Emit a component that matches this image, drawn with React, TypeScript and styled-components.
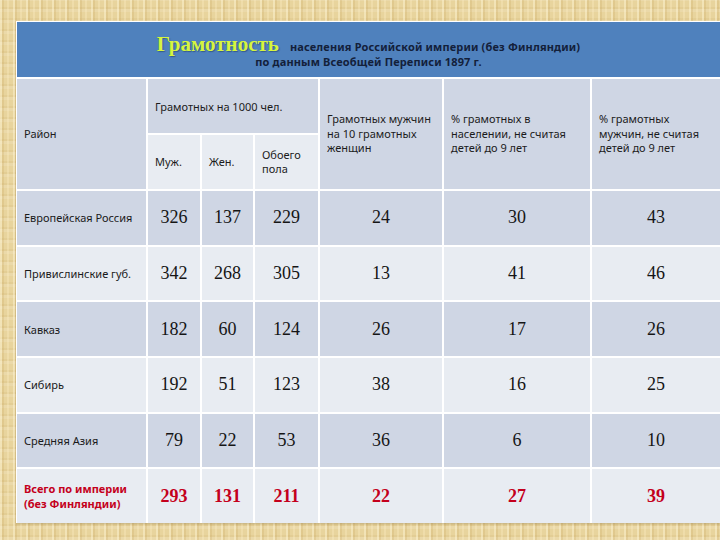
import React from "react";
import styled, { createGlobalStyle } from "styled-components";

const GlobalStyle = createGlobalStyle`
  html, body {
    margin: 0;
    padding: 0;
  }
  body {
    width: 720px;
    height: 540px;
    overflow: hidden;
    background-color: #e8d49d;
    background-image:
      repeating-linear-gradient(90deg, rgba(255, 246, 214, 0.45) 0 2px, rgba(196, 160, 86, 0.22) 2px 4px, transparent 4px 7px, rgba(255, 240, 200, 0.3) 7px 9px, transparent 9px 13px),
      repeating-linear-gradient(0deg, rgba(255, 255, 255, 0.12) 0 3px, rgba(180, 145, 70, 0.1) 3px 5px, transparent 5px 11px);
  }
`;

const Page = styled.div`
  padding: 21px 0 0 16px;
  box-sizing: border-box;
  width: 720px;
  height: 540px;
`;

const Table = styled.div`
  display: grid;
  grid-template-columns: 129px 52px 51px 63px 122px 146px 128px;
  grid-template-rows: 55px 54px 54px repeat(6, 1fr);
  gap: 2px;
  width: 704px;
  height: 502px;
  box-sizing: border-box;
  padding: 1px 0 0 1px;
  background: #ffffff;
  box-shadow: 0 1px 2px rgba(120, 100, 60, 0.35);
`;

const TitleBand = styled.div`
  grid-column: 1 / -1;
  grid-row: 1;
  background: #4f81bd;
  display: flex;
  flex-direction: column;
  align-items: center;
  justify-content: center;
  padding-top: 3px;
`;

const TitleLine = styled.div`
  display: flex;
  align-items: baseline;
  gap: 11px;
  line-height: 21px;
`;

const TitleMain = styled.span`
  font-family: "Liberation Serif", serif;
  font-weight: bold;
  font-size: 21px;
  color: #d6f53e;
  text-shadow: 1px 1px 1px rgba(20, 40, 80, 0.45);
`;

const TitleSmall = styled.span`
  font-family: "Noto Sans", sans-serif;
  font-weight: bold;
  font-size: 11px;
  letter-spacing: 0.15px;
  color: #13203a;
  line-height: 14px;
`;

type Tone = "dark" | "light";

const Cell = styled.div<{ $tone: Tone; $col?: string; $row?: string; $center?: boolean }>`
  background: ${(p) => (p.$tone === "dark" ? "#cfd6e4" : "#e8ecf2")};
  grid-column: ${(p) => p.$col ?? "auto"};
  grid-row: ${(p) => p.$row ?? "auto"};
  display: flex;
  align-items: center;
  justify-content: ${(p) => (p.$center ? "center" : "flex-start")};
  padding: 0 7px;
  min-width: 0;
  box-sizing: border-box;
`;

const HeadText = styled.div<{ $top?: number }>`
  font-family: "Noto Sans", sans-serif;
  font-size: 11px;
  line-height: 14.5px;
  color: #1c1c1c;
  white-space: nowrap;
  margin-top: ${(p) => p.$top ?? 0}px;
`;

const Label = styled.div<{ $total?: boolean }>`
  font-family: "Noto Sans", sans-serif;
  font-size: 11px;
  font-weight: ${(p) => (p.$total ? "bold" : "normal")};
  line-height: 15px;
  color: ${(p) => (p.$total ? "#c4001c" : "#1a1a1a")};
  white-space: nowrap;
`;

const Num = styled.div<{ $total?: boolean }>`
  font-family: "Liberation Serif", serif;
  font-size: 18px;
  font-weight: ${(p) => (p.$total ? "bold" : "normal")};
  color: ${(p) => (p.$total ? "#c4001c" : "#151515")};
`;

type Row = { label: React.ReactNode; values: number[]; total?: boolean };

const rows: Row[] = [
  { label: "Европейская Россия", values: [326, 137, 229, 24, 30, 43] },
  { label: "Привислинские губ.", values: [342, 268, 305, 13, 41, 46] },
  { label: "Кавказ", values: [182, 60, 124, 26, 17, 26] },
  { label: "Сибирь", values: [192, 51, 123, 38, 16, 25] },
  { label: "Средняя Азия", values: [79, 22, 53, 36, 6, 10] },
  {
    label: (
      <>
        Всего по империи
        <br />
        (без Финляндии)
      </>
    ),
    values: [293, 131, 211, 22, 27, 39],
    total: true,
  },
];

export default function App() {
  return (
    <>
      <GlobalStyle />
      <Page>
        <Table>
          <TitleBand>
            <TitleLine>
              <TitleMain>Грамотность</TitleMain>
              <TitleSmall>населения Российской империи (без Финляндии)</TitleSmall>
            </TitleLine>
            <TitleSmall>по данным Всеобщей Переписи 1897 г.</TitleSmall>
          </TitleBand>

          <Cell $tone="dark" $col="1" $row="2 / 4">
            <HeadText>Район</HeadText>
          </Cell>
          <Cell $tone="dark" $col="2 / 5" $row="2">
            <HeadText $top={2}>Грамотных на 1000 чел.</HeadText>
          </Cell>
          <Cell $tone="light" $col="2" $row="3">
            <HeadText>Муж.</HeadText>
          </Cell>
          <Cell $tone="light" $col="3" $row="3">
            <HeadText>Жен.</HeadText>
          </Cell>
          <Cell $tone="light" $col="4" $row="3">
            <HeadText>
              Обоего
              <br />
              пола
            </HeadText>
          </Cell>
          <Cell $tone="dark" $col="5" $row="2 / 4">
            <HeadText>
              Грамотных мужчин
              <br />
              на 10 грамотных
              <br />
              женщин
            </HeadText>
          </Cell>
          <Cell $tone="dark" $col="6" $row="2 / 4">
            <HeadText>
              % грамотных в
              <br />
              населении, не считая
              <br />
              детей до 9 лет
            </HeadText>
          </Cell>
          <Cell $tone="dark" $col="7" $row="2 / 4">
            <HeadText>
              % грамотных
              <br />
              мужчин, не считая
              <br />
              детей до 9 лет
            </HeadText>
          </Cell>

          {rows.map((r, i) => {
            const tone: Tone = i % 2 === 0 ? "dark" : "light";
            return (
              <React.Fragment key={i}>
                <Cell $tone={tone}>
                  <Label $total={r.total}>{r.label}</Label>
                </Cell>
                {r.values.map((v, j) => (
                  <Cell $tone={tone} $center key={j}>
                    <Num $total={r.total}>{v}</Num>
                  </Cell>
                ))}
              </React.Fragment>
            );
          })}
        </Table>
      </Page>
    </>
  );
}
